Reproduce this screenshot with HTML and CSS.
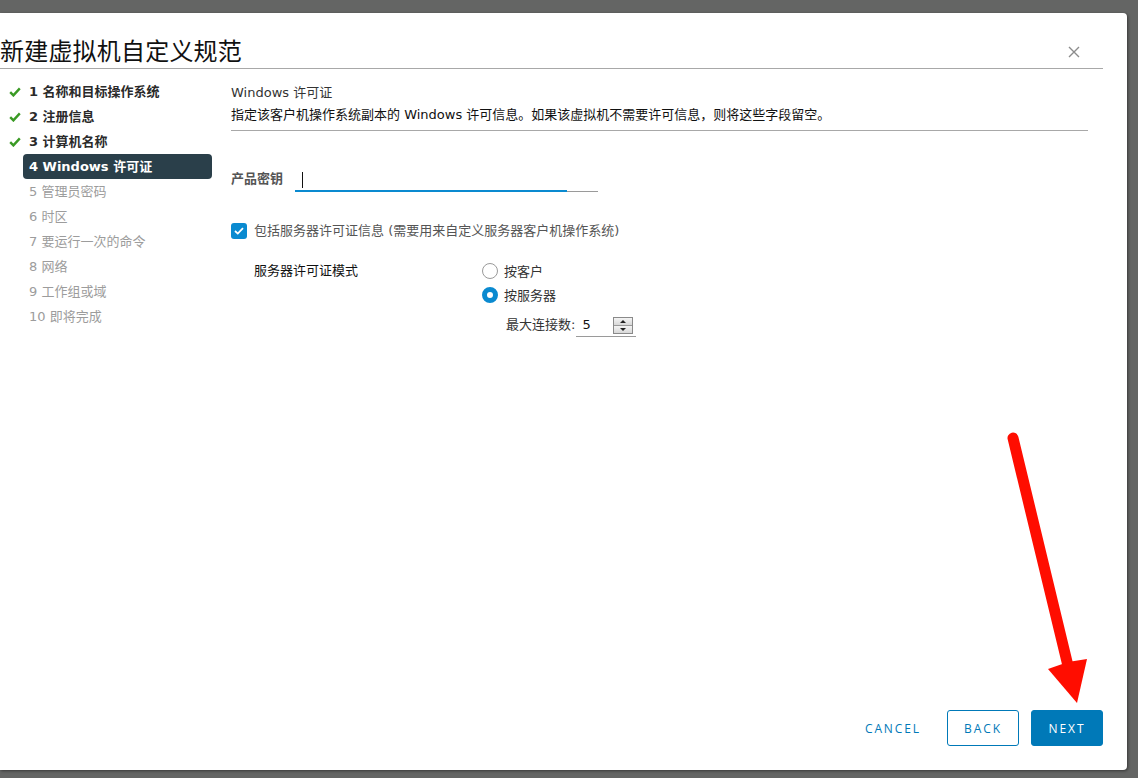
FILE: index.html
```html
<!DOCTYPE html>
<html lang="zh-CN">
<head>
<meta charset="utf-8">
<title>新建虚拟机自定义规范</title>
<link rel="stylesheet" href="styles.css">
</head>
<body>
<div class="stage">
  <div class="dialog">
    <header class="dlg-head">
      <h1 class="dlg-title">新建虚拟机自定义规范</h1>
      <button class="close" aria-label="关闭">
        <svg width="12" height="12" viewBox="0 0 12 12"><path d="M1 1 L11 11 M11 1 L1 11" stroke="#8c8c8c" stroke-width="1.4" fill="none"/></svg>
      </button>
    </header>
    <div class="dlg-body">
      <nav class="steps">
        <div class="step done"><span class="mark"><svg width="12" height="10" viewBox="0 0 12 10"><path d="M1.2 5.2 L4.4 8.4 L10.8 1.4" stroke="#3a9a24" stroke-width="2.4" fill="none"/></svg></span><span class="label">1 名称和目标操作系统</span></div>
        <div class="step done"><span class="mark"><svg width="12" height="10" viewBox="0 0 12 10"><path d="M1.2 5.2 L4.4 8.4 L10.8 1.4" stroke="#3a9a24" stroke-width="2.4" fill="none"/></svg></span><span class="label">2 注册信息</span></div>
        <div class="step done"><span class="mark"><svg width="12" height="10" viewBox="0 0 12 10"><path d="M1.2 5.2 L4.4 8.4 L10.8 1.4" stroke="#3a9a24" stroke-width="2.4" fill="none"/></svg></span><span class="label">3 计算机名称</span></div>
        <div class="step active"><span class="mark"></span><span class="label">4 Windows 许可证</span></div>
        <div class="step todo"><span class="mark"></span><span class="label">5 管理员密码</span></div>
        <div class="step todo"><span class="mark"></span><span class="label">6 时区</span></div>
        <div class="step todo"><span class="mark"></span><span class="label">7 要运行一次的命令</span></div>
        <div class="step todo"><span class="mark"></span><span class="label">8 网络</span></div>
        <div class="step todo"><span class="mark"></span><span class="label">9 工作组或域</span></div>
        <div class="step todo"><span class="mark"></span><span class="label">10 即将完成</span></div>
      </nav>
      <main class="content">
        <section class="intro">
          <h2 class="sec-title">Windows 许可证</h2>
          <p class="sec-desc">指定该客户机操作系统副本的 Windows 许可信息。如果该虚拟机不需要许可信息，则将这些字段留空。</p>
        </section>
        <div class="field">
          <label class="field-label">产品密钥</label>
          <div class="text-input"><span class="caret"></span></div>
        </div>
        <div class="check-row">
          <span class="checkbox"><svg width="10" height="8" viewBox="0 0 10 8"><path d="M1 4 L3.8 6.6 L9 1.2" stroke="#fff" stroke-width="1.8" fill="none"/></svg></span>
          <span class="check-label">包括服务器许可证信息 (需要用来自定义服务器客户机操作系统)</span>
        </div>
        <div class="mode">
          <div class="mode-label">服务器许可证模式</div>
          <div class="mode-options">
            <div class="radio-row"><span class="radio"></span><span>按客户</span></div>
            <div class="radio-row"><span class="radio on"></span><span>按服务器</span></div>
            <div class="max-row">
              <span class="max-label">最大连接数:</span>
              <div class="num-input">
                <span class="num-value">5</span>
                <span class="spinner">
                  <span class="spin up"><svg width="6" height="3" viewBox="0 0 6 3"><path d="M0 3 L3 0 L6 3Z" fill="#222"/></svg></span>
                  <span class="spin down"><svg width="6" height="3" viewBox="0 0 6 3"><path d="M0 0 L3 3 L6 0Z" fill="#222"/></svg></span>
                </span>
              </div>
            </div>
          </div>
        </div>
      </main>
    </div>
    <footer class="dlg-foot">
      <button class="btn btn-link">CANCEL</button>
      <button class="btn btn-outline">BACK</button>
      <button class="btn btn-primary">NEXT</button>
    </footer>
  </div>
  <svg class="annot-arrow" width="1138" height="778" viewBox="0 0 1138 778">
    <path d="M1013 438 L1069 670" stroke="#ff0d00" stroke-width="11" stroke-linecap="round" fill="none"/>
    <path d="M1048 669 L1068 662 L1087 659 L1077 703 Z" fill="#ff0d00"/>
  </svg>
</div>
</body>
</html>
```
FILE: styles.css
```css
* { box-sizing: border-box; }
html, body { margin: 0; padding: 0; }
body {
  background: #646564;
  font-family: "DejaVu Sans", "Noto Sans CJK SC", sans-serif;
  font-size: 13px;
  color: #222;
  width: 1138px;
  height: 778px;
  overflow: hidden;
}
.stage {
  position: relative;
  width: 1138px;
  height: 778px;
  padding-top: 13px;
}
.dialog {
  width: 1127px;
  height: 757px;
  background: #fff;
  border-radius: 0 4px 4px 0;
  box-shadow: 1px 1px 3px rgba(0,0,0,0.45);
  display: flex;
  flex-direction: column;
}
.dlg-head {
  height: 56px;
  margin-right: 24px;
  border-bottom: 1px solid #a8a8a8;
  display: flex;
  justify-content: space-between;
  align-items: flex-start;
}
.dlg-title {
  margin: 0;
  padding-top: 22px;
  font-family: "Noto Sans CJK SC", sans-serif;
  font-weight: 400;
  font-size: 24px;
  line-height: 30px;
  color: #111;
  letter-spacing: 0.2px;
}
.close {
  margin: 33px 23px 0 0;
  padding: 0;
  border: 0;
  background: none;
  width: 12px;
  height: 12px;
  display: flex;
}
.dlg-body {
  flex: 1;
  display: flex;
}
.steps {
  width: 212px;
  padding-top: 10px;
  display: flex;
  flex-direction: column;
}
.step {
  height: 25px;
  display: flex;
  align-items: center;
}
.step .mark {
  width: 23px;
  padding-left: 9px;
  display: flex;
  align-items: center;
}
.step .label {
  width: 189px;
  height: 25px;
  line-height: 25px;
  padding-left: 6px;
  border-radius: 4px;
  white-space: nowrap;
}
.step.done .label { font-weight: 700; color: #2a2a2a; }
.step.active .label { font-weight: 700; color: #fff; background: #2a3f4a; }
.step.todo .label { color: #9c9c9c; }
.content {
  flex: 1;
  margin-left: 19px;
  margin-right: 39px;
}
.intro {
  padding-top: 15px;
  padding-bottom: 6px;
  border-bottom: 1px solid #a8a8a8;
}
.sec-title {
  margin: 0;
  font-size: 13px;
  font-weight: 400;
  line-height: 18px;
  color: #333;
}
.sec-desc {
  margin: 4px 0 0;
  line-height: 18px;
  color: #111;
}
.field {
  margin-top: 34px;
  display: flex;
  align-items: center;
  gap: 12px;
  height: 27px;
}
.field-label {
  line-height: 27px;
  color: #555;
  font-weight: 700;
}
.text-input {
  position: relative;
  width: 303px;
  height: 27px;
  border-bottom: 1px solid #9a9a9a;
}
.text-input::after {
  content: "";
  position: absolute;
  left: 0;
  bottom: -1px;
  width: 272px;
  height: 2px;
  background: #0a8ad0;
}
.caret {
  position: absolute;
  left: 7px;
  top: 7px;
  width: 1px;
  height: 16px;
  background: #111;
}
.check-row {
  margin-top: 31px;
  display: flex;
  align-items: center;
  gap: 7px;
  height: 16px;
}
.checkbox {
  width: 16px;
  height: 16px;
  border-radius: 3px;
  background: #0a8ad0;
  display: flex;
  align-items: center;
  justify-content: center;
}
.check-label { color: #555; line-height: 16px; }
.mode {
  margin-top: 19px;
  padding-left: 23px;
  display: flex;
}
.mode-label {
  width: 228px;
  line-height: 25px;
  color: #111;
}
.mode-options { display: flex; flex-direction: column; }
.radio-row {
  height: 25px;
  display: flex;
  align-items: center;
  gap: 6px;
  color: #333;
}
.radio-row + .radio-row { margin-top: -1px; }
.radio {
  width: 16px;
  height: 16px;
  border-radius: 50%;
  border: 1px solid #9a9a9a;
  background: #fff;
}
.radio.on {
  border: 5.5px solid #0a8ad0;
  background: #fff;
}
.max-row {
  margin-top: 8px;
  padding-left: 24px;
  height: 22px;
  display: flex;
  align-items: flex-start;
  gap: 1px;
}
.max-label { line-height: 20px; color: #333; }
.num-input {
  width: 60px;
  height: 22px;
  border-bottom: 1px solid #9a9a9a;
  display: flex;
  align-items: flex-start;
  justify-content: space-between;
  padding: 0 3px 0 6px;
}
.num-value { line-height: 20px; color: #111; }
.spinner {
  margin-top: 2px;
  width: 20px;
  height: 17px;
  display: flex;
  flex-direction: column;
  border: 1px solid #8a8a8a;
  background: #e8e8e8;
}
.spin {
  flex: 1;
  display: flex;
  align-items: center;
  justify-content: center;
  background: linear-gradient(#f4f4f4, #d8d8d8);
}
.spin.up { border-bottom: 1px solid #9a9a9a; }
.dlg-foot {
  padding: 0 24px 24px 0;
  display: flex;
  justify-content: flex-end;
  align-items: center;
}
.btn {
  height: 36px;
  min-width: 72px;
  padding: 0 12px;
  font-family: "Open Sans", sans-serif;
  font-size: 12px;
  letter-spacing: 1.9px;
  border-radius: 3px;
  cursor: pointer;
  display: flex;
  align-items: center;
  justify-content: center;
}
.btn-link {
  background: none;
  border: 0;
  color: #0079b8;
  margin-right: 14px;
}
.btn-outline {
  background: #fff;
  border: 1px solid #0079b8;
  color: #0079b8;
  margin-right: 12px;
}
.btn-primary {
  background: #0079b8;
  border: 1px solid #0079b8;
  color: #fff;
}
.annot-arrow {
  position: absolute;
  left: 0;
  top: 0;
  pointer-events: none;
}
```
